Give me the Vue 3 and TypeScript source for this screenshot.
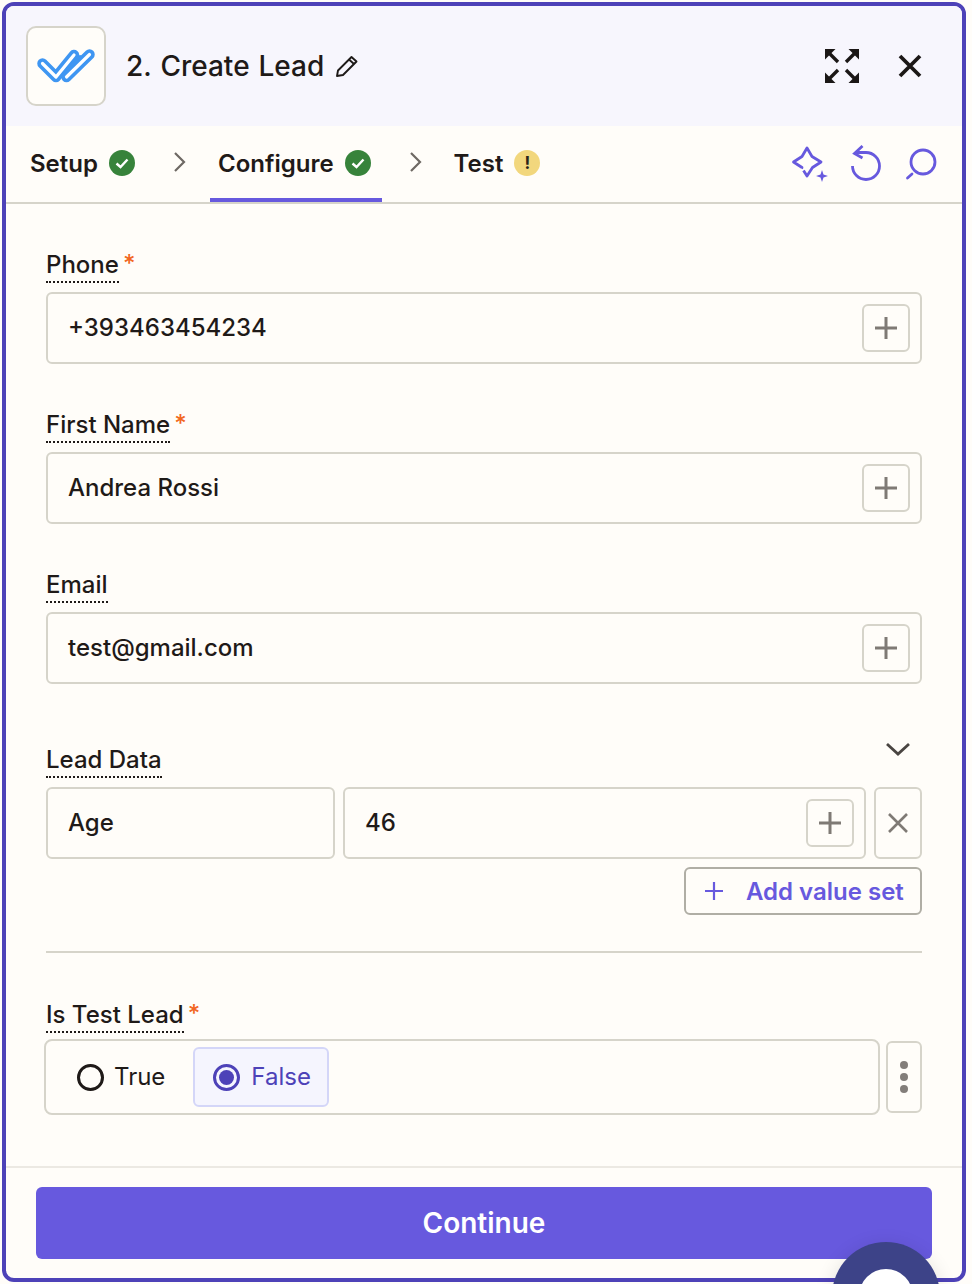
<script setup lang="ts">
const fields: { label: string; value: string; required: boolean }[] = [
  { label: 'Phone', value: '+393463454234', required: true },
  { label: 'First Name', value: 'Andrea Rossi', required: true },
  { label: 'Email', value: 'test@gmail.com', required: false },
]
</script>

<template>
  <div class="frame">
    <header class="head">
      <div class="logo">
        <svg width="60" height="40" viewBox="36 46 60 40" fill="none">
          <g stroke="#3f96f2" stroke-width="10.5" stroke-linecap="round" stroke-linejoin="round">
            <path d="M42.5 63.5 L56 77 L74 55" />
            <path d="M66.5 70 L66.5 77 L89.5 54.5" />
          </g>
          <g stroke="#ffffff" stroke-width="3.2" stroke-linecap="round" stroke-linejoin="round">
            <path d="M42.5 63.5 L56 77 L74 55" />
            <path d="M66.5 77 L89.5 54.5" />
          </g>
          <path d="M68 69 L80 57" stroke="#3f96f2" stroke-width="4" stroke-linecap="round" />
        </svg>
      </div>
      <h1 class="title">2. Create Lead</h1>
      <svg class="pencil" width="24" height="24" viewBox="0 0 24 24" fill="none" stroke="#1e1a18" stroke-width="1.9" stroke-linejoin="round">
        <path d="M2 22 L3 16.5 L16.5 3 L21.5 7.5 L8 21 Z" />
        <path d="M14 5.5 L19 10" />
      </svg>
      <div class="head-actions">
        <svg width="34" height="34" viewBox="0 0 34 34" fill="#1b1716" stroke="#1b1716" stroke-width="3.4">
          <path d="M0 0H10.5L0 10.5Z" stroke="none" />
          <path d="M3 3L13 13" />
          <path d="M34 0H23.5L34 10.5Z" stroke="none" />
          <path d="M31 3L21 13" />
          <path d="M0 34H10.5L0 23.5Z" stroke="none" />
          <path d="M3 31L13 21" />
          <path d="M34 34H23.5L34 23.5Z" stroke="none" />
          <path d="M31 31L21 21" />
        </svg>
        <svg width="24" height="24" viewBox="0 0 24 24" fill="none" stroke="#1b1716" stroke-width="3.8">
          <path d="M2 2L22 22M22 2L2 22" />
        </svg>
      </div>
    </header>

    <nav class="tabs">
      <div class="tab">
        <span>Setup</span>
        <span class="status ok">
          <svg width="16" height="16" viewBox="0 0 16 16" fill="none" stroke="#fff" stroke-width="2.4"><path d="M2.5 8.5L6.5 12L13.5 4.5" /></svg>
        </span>
      </div>
      <svg class="chev" width="14" height="20" viewBox="0 0 14 20" fill="none" stroke="#6e6964" stroke-width="2.2"><path d="M2 1L11 10L2 19" /></svg>
      <div class="tab active">
        <span>Configure</span>
        <span class="status ok">
          <svg width="16" height="16" viewBox="0 0 16 16" fill="none" stroke="#fff" stroke-width="2.4"><path d="M2.5 8.5L6.5 12L13.5 4.5" /></svg>
        </span>
      </div>
      <svg class="chev chev2" width="14" height="20" viewBox="0 0 14 20" fill="none" stroke="#6e6964" stroke-width="2.2"><path d="M2 1L11 10L2 19" /></svg>
      <div class="tab">
        <span>Test</span>
        <span class="status warn">!</span>
      </div>
      <div class="tab-tools">
        <svg class="spark" width="38" height="38" viewBox="0 0 38 38" fill="none">
          <path d="M10.5 24.5 L11 23.5 L2.5 18 L11 12.5 L16 4 L21 12.5 L30 18 L21.5 23.5 L16 32 L12.5 26.5" stroke="#6759de" stroke-width="2.8" stroke-linejoin="round" />
          <path d="M31 26 L32.5 30.5 L37 32 L32.5 33.5 L31 38 L29.5 33.5 L25 32 L29.5 30.5 Z" fill="#6759de" />
        </svg>
        <svg width="32" height="36" viewBox="0 0 32 36" fill="none" stroke="#6759de" stroke-width="2.8">
          <path d="M1.5 21 A13.5 13.5 0 1 0 15 7.5 H5" />
          <path d="M11.5 1 L3.5 8.5 L11.5 13" />
        </svg>
        <svg width="34" height="36" viewBox="0 0 34 36" fill="none" stroke="#6759de" stroke-width="2.8">
          <circle cx="19" cy="17" r="12" />
          <path d="M8 29 L3.5 33" stroke-linecap="round" />
        </svg>
      </div>
    </nav>

    <main class="body">
      <section v-for="f in fields" :key="f.label" class="field">
        <div class="label-row">
          <span class="label">{{ f.label }}</span><span v-if="f.required" class="req">*</span>
        </div>
        <div class="input">
          <span class="value">{{ f.value }}</span>
          <button class="plus-btn">
            <svg width="24" height="24" viewBox="0 0 24 24" stroke="#7f7a75" stroke-width="3" fill="none"><path d="M12 1V23M1 12H23" /></svg>
          </button>
        </div>
      </section>

      <section class="field lead">
        <div class="label-row">
          <span class="label">Lead Data</span>
          <svg class="collapse" width="26" height="16" viewBox="0 0 26 16" fill="none" stroke="#4a4542" stroke-width="2.8"><path d="M2 3L13 13L24 3" /></svg>
        </div>
        <div class="pair">
          <div class="input key"><span class="value">Age</span></div>
          <div class="input val">
            <span class="value">46</span>
            <button class="plus-btn">
              <svg width="24" height="24" viewBox="0 0 24 24" stroke="#7f7a75" stroke-width="3" fill="none"><path d="M12 1V23M1 12H23" /></svg>
            </button>
          </div>
          <button class="del-btn">
            <svg width="20" height="20" viewBox="0 0 20 20" stroke="#7f7a75" stroke-width="2.6" fill="none"><path d="M1 1L19 19M19 1L1 19" /></svg>
          </button>
        </div>
        <div class="add-row">
          <button class="add-btn">
            <svg width="20" height="20" viewBox="0 0 20 20" stroke="#6759de" stroke-width="2.2" fill="none"><path d="M10 1V19M1 10H19" /></svg>
            <span>Add value set</span>
          </button>
        </div>
      </section>

      <hr class="rule" />

      <section class="field test">
        <div class="label-row">
          <span class="label">Is Test Lead</span><span class="req">*</span>
        </div>
        <div class="bool-row">
          <div class="bool">
            <label class="opt">
              <span class="radio"></span>
              <span class="opt-text">True</span>
            </label>
            <label class="opt on">
              <span class="radio"></span>
              <span class="opt-text">False</span>
            </label>
          </div>
          <button class="more"><i></i><i></i><i></i></button>
        </div>
      </section>
    </main>

    <footer class="foot">
      <button class="continue">Continue</button>
    </footer>

    <div class="chat"><div class="chat-in"></div></div>
  </div>
</template>

<style>
html, body { margin: 0; background: #fffdf9; }
</style>

<style scoped>
* { box-sizing: border-box; }
.frame {
  position: relative;
  width: 964px;
  height: 1280px;
  margin: 2px;
  border: 4px solid #4d42b8;
  border-radius: 12px;
  background: #fffdf9;
  overflow: hidden;
  display: flex;
  flex-direction: column;
  font-family: Inter, "Liberation Sans", sans-serif;
  color: #1f1a18;
}
button { font-family: inherit; padding: 0; background: none; cursor: pointer; }
.head {
  height: 120px;
  flex: none;
  background: #f7f6fd;
  display: flex;
  align-items: center;
  padding-left: 20px;
}
.logo {
  width: 80px;
  height: 80px;
  border: 2px solid #d6d4ca;
  border-radius: 10px;
  background: #fffdf9;
  display: flex;
  align-items: center;
  justify-content: center;
  margin-right: 20px;
}
.title {
  margin: 0 11px 0 0;
  font-size: 28px;
  font-weight: 500;
  line-height: 40px;
  word-spacing: 1.5px;
  white-space: nowrap;
}
.head-actions {
  margin-left: auto;
  margin-right: 40px;
  display: flex;
  align-items: center;
  gap: 39px;
}
.tabs {
  height: 78px;
  flex: none;
  display: flex;
  align-items: stretch;
  border-bottom: 2px solid #d6d4ca;
  padding-left: 16px;
}
.tab {
  display: flex;
  align-items: center;
  gap: 11px;
  padding: 0 11px 2px 8px;
  font-size: 24px;
  font-weight: 600;
  height: 76px;
}
.tab.active { box-shadow: inset 0 -4px 0 #6759de; }
.status {
  width: 26px;
  height: 26px;
  border-radius: 50%;
  display: flex;
  align-items: center;
  justify-content: center;
}
.ok { background: #37833b; }
.warn { background: #f2d77d; color: #2a2418; font-size: 17px; font-weight: 700; }
.chev { align-self: center; margin: -4px 23px 0 27px; }
.chev2 { margin: -4px 23px 0 27px; }
.tab-tools {
  margin-left: auto;
  margin-right: 24px;
  display: flex;
  align-items: center;
  gap: 21px;
  padding-bottom: 2px;
}
.spark { margin-right: 1px; }
.body {
  flex: 1;
  min-height: 0;
  padding: 46px 40px 0;
  display: flex;
  flex-direction: column;
}
.field { margin-bottom: 46px; }
.field.lead { margin-top: 15px; margin-bottom: 36px; }
.field.test { margin-bottom: 0; }
.label-row {
  height: 33px;
  margin-bottom: 9px;
  display: flex;
  align-items: flex-start;
  position: relative;
}
.test .label-row { margin-bottom: 6px; }
.label {
  font-size: 24px;
  font-weight: 500;
  line-height: 30px;
  height: 33px;
  border-bottom: 2px dotted #1f1a18;
}
.req {
  color: #f26722;
  font-size: 24px;
  line-height: 28px;
  margin-left: 4px;
  font-weight: 500;
}
.collapse { position: absolute; right: 11px; top: -4px; }
.input {
  height: 72px;
  border: 2px solid #d6d4ca;
  border-radius: 6px;
  display: flex;
  align-items: center;
  justify-content: space-between;
  padding: 0 10px 0 20px;
}
.value {
  font-size: 24px;
  font-weight: 500;
  padding-bottom: 2px;
}
.plus-btn {
  width: 48px;
  height: 48px;
  border: 2px solid #d6d4ca;
  border-radius: 6px;
  display: flex;
  align-items: center;
  justify-content: center;
}
.pair { display: flex; gap: 8px; margin-top: 1px; }
.key { width: 289px; flex: none; }
.val { flex: 1; }
.del-btn {
  width: 48px;
  height: 72px;
  flex: none;
  border: 2px solid #d6d4ca;
  border-radius: 6px;
  display: flex;
  align-items: center;
  justify-content: center;
}
.add-row { display: flex; justify-content: flex-end; margin-top: 8px; }
.add-btn {
  width: 238px;
  height: 48px;
  border: 2px solid #b0aea5;
  border-radius: 6px;
  display: flex;
  align-items: center;
  gap: 22px;
  padding-left: 18px;
  color: #6759de;
  font-size: 24px;
  font-weight: 600;
}
.rule {
  width: 100%;
  margin: 0 0 47px;
  border: 0;
  border-top: 2px solid #d6d4ca;
}
.bool-row { display: flex; align-items: center; gap: 6px; margin-left: -2px; }
.bool {
  flex: 1;
  height: 76px;
  border: 2px solid #d6d4ca;
  border-radius: 8px;
  display: flex;
  align-items: center;
  padding-left: 15px;
}
.opt {
  height: 60px;
  display: flex;
  align-items: center;
  gap: 10px;
  padding: 0 14px;
  border: 2px solid transparent;
  border-radius: 6px;
  font-size: 24px;
  margin-right: 12px;
}
.opt-text { padding-bottom: 2px; }
.opt.on {
  background: #f5f5fe;
  border-color: #d4d6f8;
  color: #4d42b8;
  gap: 11px;
  padding: 0 16px 0 18px;
  margin: 0;
}
.radio {
  width: 27px;
  height: 27px;
  border-radius: 50%;
  border: 3px solid #1f1a18;
  flex: none;
  position: relative;
}
.on .radio { border-color: #4d42b8; }
.on .radio::after {
  content: "";
  position: absolute;
  inset: 3px;
  border-radius: 50%;
  background: #4d42b8;
}
.more {
  width: 36px;
  height: 72px;
  flex: none;
  border: 2px solid #d6d4ca;
  border-radius: 6px;
  display: flex;
  flex-direction: column;
  align-items: center;
  justify-content: center;
  gap: 4px;
}
.more i { width: 8px; height: 8px; border-radius: 50%; background: #837e7a; display: block; }
.foot {
  flex: none;
  height: 112px;
  border-top: 2px solid #ece9e3;
  padding: 19px 30px 0;
}
.continue {
  width: 100%;
  height: 72px;
  border: 0;
  border-radius: 6px;
  background: #6759de;
  color: #fff;
  font-size: 28px;
  font-weight: 600;
}
.chat {
  position: fixed;
  left: 832px;
  top: 1242px;
  width: 108px;
  height: 108px;
  border-radius: 50%;
  background: #3d4388;
  box-shadow: 0 4px 20px rgba(0, 0, 0, 0.12);
  display: flex;
  justify-content: center;
  padding-top: 27px;
}
.chat-in { width: 54px; height: 54px; border-radius: 50%; background: #fff; }
</style>
